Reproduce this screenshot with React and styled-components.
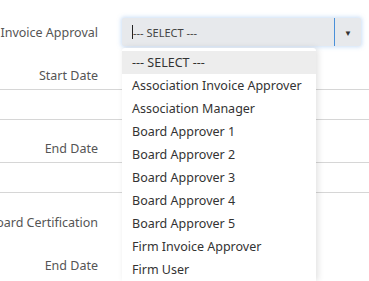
import React from "react";
import styled, { createGlobalStyle } from "styled-components";

const GlobalStyle = createGlobalStyle`
  html, body {
    margin: 0;
    padding: 0;
    background: #fff;
    overflow: hidden;
  }
  body {
    font-family: "Noto Sans", "Open Sans", sans-serif;
    font-size: 12.5px;
    color: #555;
  }
`;

const Page = styled.div`
  position: relative;
  width: 369px;
  height: 281px;
  overflow: hidden;
  padding-top: 18px;
  box-sizing: border-box;
`;

const Row = styled.div`
  display: grid;
  grid-template-columns: 98px 1fr;
  column-gap: 24px;
  align-items: center;
  height: ${(p) => p.h || 28}px;
  margin-bottom: ${(p) => p.mb || 0}px;
`;

// label sits right-aligned; long ones spill out to the left
const Label = styled.div`
  display: flex;
  justify-content: flex-end;
  white-space: nowrap;
  color: #555;
`;

const Field = styled.div`
  height: 29px;
  border-top: 1px solid #d6d6d6;
  border-bottom: 1px solid #d6d6d6;
  margin-bottom: ${(p) => p.mb || 0}px;
`;

const Select = styled.div`
  width: 239px;
  height: 28px;
  box-sizing: border-box;
  display: flex;
  align-items: stretch;
  background: #e7e9ec;
  border-radius: 2px;
  box-shadow: 0 0 4px 1px rgba(102, 160, 230, 0.35);
`;

const SelectText = styled.div`
  flex: 1;
  display: flex;
  align-items: center;
  padding-left: 10px;
  font-size: 11px;
  color: #444;
  &::before {
    content: "";
    width: 1px;
    height: 14px;
    background: #222;
  }
`;

const ArrowBox = styled.div`
  width: 26px;
  border-left: 1px solid #4a90d9;
  display: flex;
  align-items: center;
  justify-content: center;
  font-size: 8px;
  color: #333;
`;

const Menu = styled.ul`
  position: absolute;
  left: 122px;
  top: 48px;
  width: 194px;
  margin: 0;
  padding: 3px 0 0;
  list-style: none;
  background: #fff;
  border-radius: 3px 3px 0 0;
  box-shadow: 2px 0 6px rgba(0, 0, 0, 0.12);
`;

const Option = styled.li`
  height: 23px;
  line-height: 23px;
  padding-left: 10px;
  color: #333;
  font-size: 12.5px;
  white-space: nowrap;
  background: ${(p) => (p.active ? "#ededed" : "transparent")};
`;

const options = [
  "--- SELECT ---",
  "Association Invoice Approver",
  "Association Manager",
  "Board Approver 1",
  "Board Approver 2",
  "Board Approver 3",
  "Board Approver 4",
  "Board Approver 5",
  "Firm Invoice Approver",
  "Firm User",
];

const App = () => {
  return (
    <>
      <GlobalStyle />
      <Page>
        <Row h={28} mb={15}>
          <Label>Invoice Approval</Label>
          <Select>
            <SelectText>--- SELECT ---</SelectText>
            <ArrowBox>▼</ArrowBox>
          </Select>
        </Row>
        <Row h={28}>
          <Label>Start Date</Label>
          <div />
        </Row>
        <Field mb={14} />
        <Row h={28}>
          <Label>End Date</Label>
          <div />
        </Row>
        <Field mb={15} />
        <Row h={28} mb={15}>
          <Label>Board Certification</Label>
          <div />
        </Row>
        <Row h={28}>
          <Label>End Date</Label>
          <div />
        </Row>
        <Menu>
          {options.map((o, i) => (
            <Option key={o} active={i === 0}>
              {o}
            </Option>
          ))}
        </Menu>
      </Page>
    </>
  );
};

export default App;
